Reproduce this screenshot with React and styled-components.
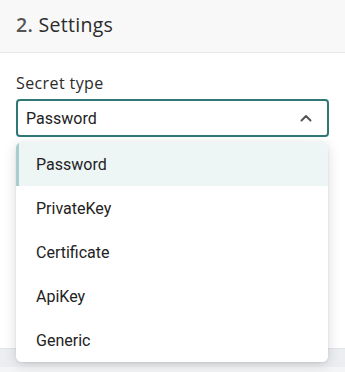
import styled, { createGlobalStyle } from "styled-components";

const GlobalStyle = createGlobalStyle`
  html, body {
    margin: 0;
    padding: 0;
    background: #ffffff;
  }
  * {
    box-sizing: border-box;
  }
`;

const Page = styled.div`
  width: 345px;
  height: 372px;
  display: flex;
  flex-direction: column;
  overflow: hidden;
`;

const Header = styled.div`
  height: 53px;
  display: flex;
  align-items: center;
  padding: 0 16px 4px;
  background: #f8f8f8;
  border-bottom: 1px solid #e6e8ea;
`;

const Title = styled.h2`
  margin: 0;
  font-family: "Open Sans", "Noto Sans", sans-serif;
  font-size: 19.5px;
  font-weight: 400;
  letter-spacing: 0.3px;
  color: #2b2b2b;
`;

const Step = styled.span`
  color: #555;
  font-weight: 600;
`;

const Body = styled.div`
  flex: 1;
  padding: 19px 16px 0;
`;

const Label = styled.label`
  display: block;
  font-family: "Open Sans", "Noto Sans", sans-serif;
  font-size: 16px;
  letter-spacing: 0.4px;
  color: #2b2b2b;
  margin-bottom: 5px;
`;

const Field = styled.div`
  position: relative;
`;

const SelectBox = styled.div`
  height: 38px;
  display: flex;
  align-items: center;
  justify-content: space-between;
  padding: 0 14px 0 8px;
  border: 2px solid #2f7875;
  border-radius: 4px;
  font-family: Roboto, "Liberation Sans", sans-serif;
  font-size: 16px;
  color: #222;
`;

const Menu = styled.ul`
  position: absolute;
  top: 43px;
  left: 0;
  width: 312px;
  margin: 0;
  padding: 0;
  list-style: none;
  background: #fff;
  border-radius: 6px;
  box-shadow: 0 3px 14px rgba(0, 0, 0, 0.14), 0 1px 3px rgba(0, 0, 0, 0.08);
  overflow: hidden;
  z-index: 2;
`;

const Option = styled.li`
  height: 44px;
  display: flex;
  align-items: center;
  padding-left: ${(p) => (p.$active ? "17px" : "20px")};
  font-family: Roboto, "Liberation Sans", sans-serif;
  font-size: 16px;
  color: #222;
  background: ${(p) => (p.$active ? "#eef5f5" : "#fff")};
  border-left: ${(p) => (p.$active ? "3px solid #a8cdcc" : "none")};
`;

const Footer = styled.div`
  height: 24px;
  background: #eceef1;
  border-top: 1px solid #e2e4e8;
  border-bottom: 5px solid #f4f5f7;
`;

const options = ["Password", "PrivateKey", "Certificate", "ApiKey", "Generic"];

function Chevron() {
  return (
    <svg width="14" height="14" viewBox="0 0 14 14" fill="none">
      <path
        d="M2.5 9.5 L7 5 L11.5 9.5"
        stroke="#555"
        strokeWidth="2"
        strokeLinecap="round"
        strokeLinejoin="round"
      />
    </svg>
  );
}

export default function App() {
  return (
    <>
      <GlobalStyle />
      <Page>
        <Header>
          <Title>
            <Step>2.</Step> Settings
          </Title>
        </Header>
        <Body>
          <Label>Secret type</Label>
          <Field>
            <SelectBox>
              Password
              <Chevron />
            </SelectBox>
            <Menu>
              {options.map((o, i) => (
                <Option key={o} $active={i === 0}>
                  {o}
                </Option>
              ))}
            </Menu>
          </Field>
        </Body>
        <Footer />
      </Page>
    </>
  );
}
